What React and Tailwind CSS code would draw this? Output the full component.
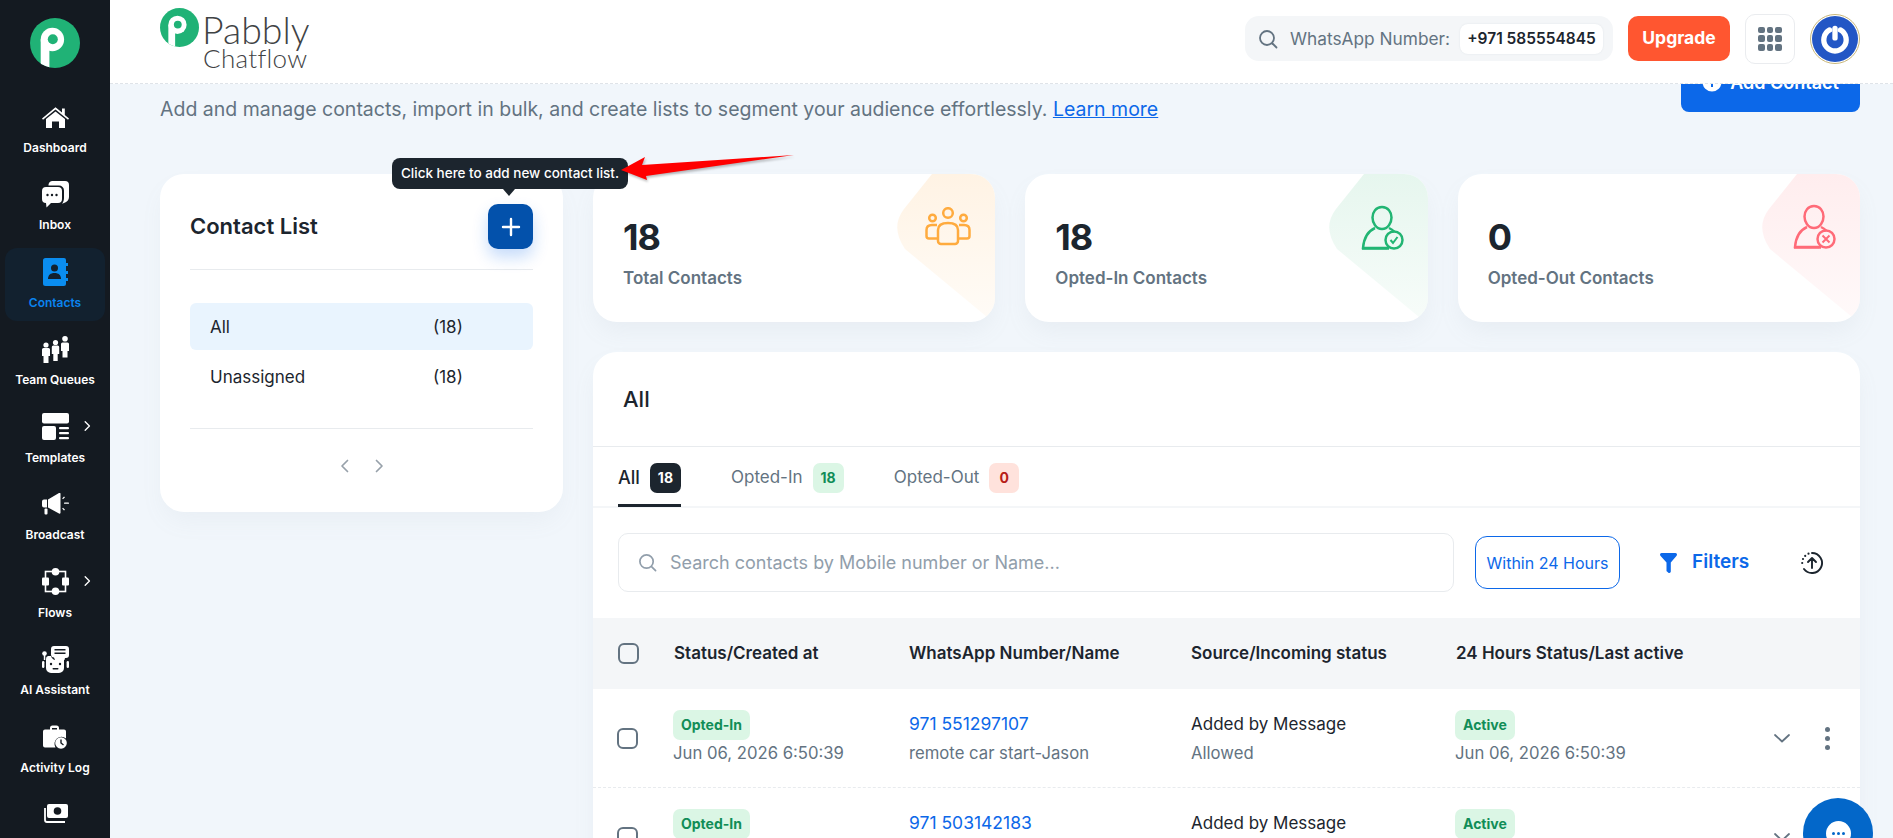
import React from "react";

const LogoMark = ({ className, id }) => (
  <svg viewBox="0 0 50 50" className={className}>
    <defs>
      <clipPath id={id}><circle cx="25" cy="25" r="25" /></clipPath>
    </defs>
    <circle cx="25" cy="25" r="25" fill="#20b276" />
    <g clipPath={`url(#${id})`}>
      <rect x="10.7" y="21.5" width="8.7" height="30" fill="#fff" />
      <circle cx="22.4" cy="21.5" r="11.7" fill="#fff" />
      <circle cx="22.8" cy="21.3" r="5" fill="#20b276" />
    </g>
  </svg>
);

const HomeIcon = () => (
  <svg width="27" height="22" viewBox="0 0 27 22" fill="#fff">
    <path d="M13.5 1.2 20 6.6V2.5h2.8v6.4L27 12.4l-1 1.3L13.5 3.6 1 13.7l-1-1.3z" />
    <path d="M13.5 5.4 23 13v9h-6v-6.5h-7V22H4v-9z" />
  </svg>
);
const InboxIcon = () => (
  <svg width="27" height="27" viewBox="0 0 27 27" fill="#fff">
    <path d="M10 0h13a4 4 0 0 1 4 4v12c0 3-2 5-5 6l-2 .8c1.4-1.8 2-3.500 2-5.800V9.500a5 5 0 0 0-5-5H6.500A4 4 0 0 1 10 0z" />
    <path d="M4 6h12a4 4 0 0 1 4 4v8a4 4 0 0 1-4 4H9l-4.500 4.500L4 22a4 4 0 0 1-4-4v-8a4 4 0 0 1 4-4z" />
    <circle cx="5.500" cy="14" r="1.200" fill="#141a21" />
    <circle cx="10" cy="14" r="1.200" fill="#141a21" />
    <circle cx="14.500" cy="14" r="1.200" fill="#141a21" />
  </svg>
);
const ContactsIcon = () => (
  <svg width="25" height="28" viewBox="0 0 25 28">
    <path fill="#0a8df0" d="M2.500 0H21a2 2 0 0 1 2 2v3h2v3h-2v5h2v3h-2v4h2v3h-2v3a2 2 0 0 1-2 2H2.500A2.500 2.500 0 0 1 0 25.500v-23A2.500 2.500 0 0 1 2.500 0z" />
    <circle cx="11.500" cy="10" r="3.500" fill="#12212f" />
    <path fill="#12212f" d="M5 21c0-4 2.500-6 6.500-6s6.500 2 6.500 6z" />
  </svg>
);
const TeamIcon = () => (
  <svg width="27" height="27" viewBox="0 0 27 27" fill="#fff">
    <circle cx="4" cy="9" r="2.600" /><path d="M0 13.500a1.500 1.500 0 0 1 1.500-1.500h5A1.500 1.500 0 0 1 8 13.500V20H6.500v7h-5v-7H0z" />
    <circle cx="13.500" cy="6.500" r="2.600" /><path d="M9.800 11a1.500 1.500 0 0 1 1.500-1.500h4.400a1.500 1.500 0 0 1 1.500 1.500v7h-1.500v7h-4.400v-7H9.800z" />
    <circle cx="23" cy="2.800" r="2.800" /><path d="M19 8a1.500 1.500 0 0 1 1.500-1.500h5A1.500 1.500 0 0 1 27 8v7h-1.500v6.500h-5V15H19z" />
  </svg>
);
const TemplatesIcon = () => (
  <svg width="27" height="27" viewBox="0 0 27 27" fill="#fff">
    <rect width="27" height="10.500" rx="2" />
    <rect y="13" width="14" height="14" rx="2" />
    <rect x="17" y="14" width="10" height="2.200" rx="1" />
    <rect x="17" y="19" width="10" height="2.200" rx="1" />
    <rect x="17" y="24" width="10" height="2.200" rx="1" />
  </svg>
);
const BroadcastIcon = () => (
  <svg width="27" height="22" viewBox="0 0 27 22" fill="#fff">
    <path d="M0 8.500A2 2 0 0 1 2 6.500h3v8H2a2 2 0 0 1-2-2zM6 6.500 17 0a1 1 0 0 1 1.500 1v18.500a1 1 0 0 1-1.500 1L6 14.500z" />
    <rect x="2.500" y="15.500" width="3" height="6" rx="1" />
    <rect x="22" y="9.500" width="5" height="1.300" rx=".6" />
    <path d="M22 3.500l1 .8-2 2-.8-.8zM22 17.500l1-.8-2-2-.8.8z" />
  </svg>
);
const FlowsIcon = () => (
  <svg width="27" height="27" viewBox="0 0 27 27" fill="none">
    <rect x="3.500" y="3.500" width="20" height="20" stroke="#fff" strokeWidth="1.600" />
    <circle cx="13.500" cy="3.800" r="3.800" fill="#fff" />
    <circle cx="13.500" cy="23.200" r="3.800" fill="#fff" />
    <rect y="9.500" width="7" height="8" rx="1" fill="#fff" />
    <rect x="20" y="9.500" width="7" height="8" rx="1" fill="#fff" />
  </svg>
);
const AiIcon = () => (
  <svg width="27" height="27" viewBox="0 0 27 27" fill="#fff">
    <circle cx="2.500" cy="7.500" r="2.300" />
    <rect x="1.800" y="9" width="1.500" height="5" />
    <path d="M12 0h12a3 3 0 0 1 3 3v6a3 3 0 0 1-3 3h-1l-.5 2H13l-1-2.500A3 3 0 0 1 9 9V3a3 3 0 0 1 3-3z" />
    <rect x="12.500" y="3" width="11" height="1.500" fill="#141a21" />
    <rect x="12.500" y="6.500" width="11" height="1.500" fill="#141a21" />
    <path d="M6 10h3c.5 2 2 3.500 4 4h9v8a5 5 0 0 1-5 5H9a5 5 0 0 1-5-5v-9a3 3 0 0 1 2-3z" />
    <rect x="0" y="15" width="2.400" height="7" rx="1.200" />
    <rect x="24.600" y="15" width="2.400" height="7" rx="1.200" />
    <circle cx="9" cy="18" r="1.200" fill="#141a21" />
    <circle cx="18" cy="18" r="1.200" fill="#141a21" />
    <rect x="10.500" y="22" width="6" height="1.400" rx=".7" fill="#141a21" />
  </svg>
);
const ActivityIcon = () => (
  <svg width="24" height="24" viewBox="0 0 24 24" fill="#fff">
    <path d="M7 5V3a2.500 2.500 0 0 1 2.500-2.500h4A2.500 2.500 0 0 1 16 3v2h-2V3h-5v2z" />
    <path d="M2 4.500h19a2 2 0 0 1 2 2v7a7 7 0 0 0-10.500 9H2a2 2 0 0 1-2-2v-14a2 2 0 0 1 2-2z" />
    <circle cx="18" cy="18" r="5.800" />
    <path d="M18 14.500V18l2.500 2" stroke="#141a21" strokeWidth="1.400" fill="none" />
  </svg>
);
const MoneyIcon = () => (
  <svg width="25" height="20" viewBox="0 0 25 20" fill="#fff">
    <rect x="4" y="0" width="21" height="14" rx="2" />
    <circle cx="14.500" cy="7" r="3.800" fill="#141a21" />
    <path d="M2 4v12a2 2 0 0 0 2 2h18" stroke="#fff" strokeWidth="1.800" fill="none" />
  </svg>
);

const navItems = [
  { label: "Dashboard", Icon: HomeIcon },
  { label: "Inbox", Icon: InboxIcon },
  { label: "Contacts", Icon: ContactsIcon, active: true },
  { label: "Team Queues", Icon: TeamIcon },
  { label: "Templates", Icon: TemplatesIcon, arrow: true },
  { label: "Broadcast", Icon: BroadcastIcon },
  { label: "Flows", Icon: FlowsIcon, arrow: true },
  { label: "AI Assistant", Icon: AiIcon },
  { label: "Activity Log", Icon: ActivityIcon },
  { label: "", Icon: MoneyIcon },
];

const Chevron = ({ dir = "right", className = "" }) => (
  <svg width="9" height="14" viewBox="0 0 9 14" fill="none" className={className}>
    <path d={dir === "right" ? "M1.500 1.500 7 7l-5.500 5.500" : "M7.500 1.500 2 7l5.500 5.500"} stroke="currentColor" strokeWidth="1.700" strokeLinecap="round" strokeLinejoin="round" />
  </svg>
);

const Sidebar = () => (
  <aside className="w-[110px] shrink-0 h-full bg-[#141a21] flex flex-col overflow-hidden">
    <div className="h-[93px] shrink-0 pt-[18px] flex justify-center">
      <LogoMark id="sideLogo" className="w-[50px] h-[50px]" />
    </div>
    <nav className="flex flex-col gap-[4.500px] px-[5px]">
      {navItems.map(({ label, Icon, active, arrow }, i) => (
        <div key={i} className={`relative h-[73px] shrink-0 flex flex-col items-center justify-center gap-[8px] rounded-[12px] ${active ? "bg-[#12212f]" : ""}`}>
          <div className="h-[28px] flex items-center justify-center"><Icon /></div>
          <span className={`h-[18px] text-[12px] leading-[18px] font-semibold whitespace-nowrap ${active ? "text-[#0a84f0]" : "text-white"}`}>{label}</span>
          {arrow && <Chevron className="absolute left-[79px] top-[17px] text-white w-[7px] h-[12px]" />}
        </div>
      ))}
    </nav>
  </aside>
);

const SearchIcon = ({ color, size = 20 }) => (
  <svg width={size} height={size} viewBox="0 0 20 20" fill="none" stroke={color} strokeWidth="1.800" strokeLinecap="round">
    <circle cx="9" cy="9" r="7" />
    <path d="m14.500 14.500 4 4" />
  </svg>
);

const Header = () => (
  <header className="relative z-20 h-[84px] shrink-0 bg-white border-b border-dashed border-[#dfe3e8] flex items-center justify-between pl-[50px] pr-[33px]">
    <div className="flex items-start h-[84px] pt-[8px]">
      <LogoMark id="headLogo" className="w-[39px] h-[39px]" />
      <div className="ml-[3px] flex flex-col font-['Lato'] font-light text-[#3f4345] mt-[3px]">
        <span className="text-[37.500px] leading-[38px]">Pabbly</span>
        <span className="text-[26px] leading-[18px] ml-[1px] tracking-[0.3px]">Chatflow</span>
      </div>
    </div>
    <div className="flex items-center pb-[6px]">
      <div className="w-[368px] h-[45px] rounded-[14px] bg-[#f4f6f8] flex items-center pl-[13px] pr-[10px]">
        <SearchIcon color="#637381" />
        <span className="ml-[12px] text-[17.300px] text-[#637381] whitespace-nowrap">WhatsApp Number:</span>
        <span className="ml-auto w-[143px] h-[30px] rounded-[8px] bg-white shadow-[0_0_2px_rgba(145,158,171,0.2)] flex items-center justify-center text-[15.500px] font-semibold text-[#1c252e] whitespace-nowrap">+971 585554845</span>
      </div>
      <button className="ml-[15px] w-[102px] h-[45px] rounded-[10px] bg-[#ff5630] text-white text-[17.500px] font-bold">Upgrade</button>
      <div className="ml-[15px] w-[50px] h-[50px] rounded-[10px] border border-[#eaecef] grid grid-cols-3 gap-[2px] p-[12px]">
        {Array.from({ length: 9 }).map((_, i) => (
          <span key={i} className="rounded-[2px] bg-[#637381]" />
        ))}
      </div>
      <div className="ml-[15px] w-[50px] h-[50px] rounded-full border border-[#c9b77a] p-[1px]">
        <div className="w-full h-full rounded-full bg-[#2356c5] flex items-center justify-center">
          <svg width="32" height="32" viewBox="0 0 30 30" fill="none" stroke="#fff" strokeWidth="5" strokeLinecap="round">
            <path d="M10 6.500a10.500 10.500 0 1 0 10 0" />
            <path d="M15 5v9" stroke="#fff" />
          </svg>
        </div>
      </div>
    </div>
  </header>
);

const Tooltip = () => (
  <div className="absolute left-[232px] -top-[16px] w-[236px] h-[31px] rounded-[8px] bg-[#1c252e] text-white text-[13.500px] font-medium flex items-center justify-center whitespace-nowrap z-30">
    Click here to add new contact list.
    <span className="absolute left-[111px] top-[31px] w-0 h-0 border-l-[6px] border-r-[6px] border-t-[7px] border-l-transparent border-r-transparent border-t-[#1c252e]" />
  </div>
);

const RedArrow = () => (
  <svg className="absolute left-[455px] -top-[24px] z-30" width="180" height="34" viewBox="0 0 180 34">
    <path d="M6 20 30 7l-3 8L179 5 31 26l1 4z" fill="#ff0000" style={{ filter: "drop-shadow(1px 2px 1px rgba(0,0,0,0.25))" }} />
  </svg>
);

const ContactListCard = () => (
  <section className="relative w-[403px] shrink-0 h-[338px] bg-white rounded-[24px] px-[30px] shadow-[0_12px_24px_-4px_rgba(145,158,171,0.08)]">
    <Tooltip />
    <RedArrow />
    <div className="h-[96px] pt-[10px] border-b border-[#e8ebee] flex items-center justify-between">
      <h2 className="text-[22px] font-semibold text-[#1c252e]">Contact List</h2>
      <button className="w-[45px] h-[45px] rounded-[10px] bg-[#0351ab] shadow-[0_8px_16px_rgba(12,104,233,0.24)] flex items-center justify-center">
        <svg width="20" height="20" viewBox="0 0 20 20" stroke="#fff" strokeWidth="2.400" strokeLinecap="round">
          <path d="M10 2v16M2 10h16" />
        </svg>
      </button>
    </div>
    <div className="pt-[33px] h-[159px] border-b border-[#e8ebee]">
      <div className="h-[47px] pt-[2px] rounded-[6px] bg-[#e9f4fe] flex items-center pl-[20px] text-[17px] text-[#1c252e]">
        <span className="w-[223px]">All</span><span>(18)</span>
      </div>
      <div className="h-[54px] pt-[2px] flex items-center pl-[20px] text-[17px] text-[#1c252e]">
        <span className="w-[223px]">Unassigned</span><span>(18)</span>
      </div>
    </div>
    <div className="flex items-center justify-center gap-[26px] h-[74px] text-[#97a1aa]">
      <Chevron dir="left" />
      <Chevron dir="right" />
    </div>
  </section>
);

const decor = "M339 0 L311 35 Q297 53 312 75 L394 143 L403 148 L403 0 Z";

const GroupIcon = () => (
  <svg width="46" height="40" viewBox="0 0 46 40" fill="none" stroke="#ffab3e" strokeWidth="2.500">
    <circle cx="23" cy="6" r="4.800" />
    <circle cx="7.500" cy="11" r="3.300" />
    <circle cx="38.500" cy="11" r="3.300" />
    <path d="M13 34V23c0-4.500 3-7 10-7s10 2.500 10 7v11a3 3 0 0 1-3 3H16a3 3 0 0 1-3-3z" />
    <path d="M12 18H7c-4 0-5.500 2-5.500 5v6c0 1.500 1 2.500 2.500 2.500h9" />
    <path d="M34 18h5c4 0 5.500 2 5.500 5v6c0 1.500-1 2.500-2.500 2.500h-9" />
  </svg>
);
const PersonIcon = ({ color, check }) => (
  <svg width="43" height="45" viewBox="0 0 43 45" fill="none" stroke={color} strokeWidth="2.500">
    <path d="M21 2c6 0 9.500 5 9.500 10.500S27 24 21 24s-9.500-6-9.500-11.500S15 2 21 2z" />
    <path d="M14 23c-7 3-11 9-12 20h24" />
    <path d="M28 23c2 1 4 2 5.500 4" />
    <path d="M1 43.300h27" strokeWidth="2.800" />
    <circle cx="33" cy="35" r="8.500" />
    {check ? (
      <path d="m29.500 35 2.500 3 4.500-6" strokeWidth="2" />
    ) : (
      <path d="m29.500 31.500 7 7m0-7-7 7" strokeWidth="2" />
    )}
  </svg>
);

const StatCard = ({ value, label, fill, id, children }) => (
  <div className="relative h-[148px] bg-white rounded-[24px] overflow-hidden shadow-[0_12px_24px_-4px_rgba(145,158,171,0.1)] pl-[30px] pt-[41px]">
    <svg className="absolute inset-0" width="403" height="148" viewBox="0 0 403 148">
      <defs>
        <linearGradient id={id} x1="0" y1="0" x2="0" y2="1">
          <stop offset="0" stopColor={fill} />
          <stop offset="1" stopColor={fill} stopOpacity="0.3" />
        </linearGradient>
      </defs>
      <path d={decor} fill={`url(#${id})`} />
    </svg>
    <div className="relative text-[36px] leading-[44px] font-bold tracking-[-1px] text-[#1c252e]">{value}</div>
    <div className="relative mt-[7px] text-[17px] leading-[24px] font-semibold text-[#637381]">{label}</div>
    {children}
  </div>
);

const Tab = ({ label, count, active, badge }) => (
  <div className={`h-[60px] pt-[4px] flex items-center gap-[10px] border-b-[3px] ${active ? "border-[#1c252e]" : "border-transparent"}`}>
    <span className={`${active ? "text-[18px] font-medium text-[#1c252e]" : "text-[17px] text-[#637381]"}`}>{label}</span>
    <span className={`h-[30px] min-w-[30px] px-[8px] rounded-[7px] flex items-center justify-center text-[14px] font-bold ${badge}`}>{count}</span>
  </div>
);

const Badge = ({ children }) => (
  <span className="inline-flex h-[30px] items-center px-[8px] rounded-[7px] bg-[#dbf6e5] text-[#118d57] text-[14px] font-bold whitespace-nowrap">{children}</span>
);

const Checkbox = () => <span className="block w-[21px] h-[21px] rounded-[6px] border-2 border-[#637381]" />;

const cols = "grid grid-cols-[81px_235px_282px_265px_1fr] items-center";

const rows = [
  { num: "971 551297107", name: "remote car start-Jason" },
  { num: "971 503142183", name: "remote car start-Jason" },
];

const TableRow = ({ num, name }) => (
  <div className={`${cols} h-[99px] shrink-0 border-b border-dashed border-[#e8ebee]`}>
    <div className="pl-[24px]"><Checkbox /></div>
    <div className="flex flex-col items-start -ml-[1px] -mt-[1px]">
      <Badge>Opted-In</Badge>
      <span className="text-[16.700px] leading-[26px] text-[#637381] whitespace-nowrap">Jun 06, 2026 6:50:39</span>
    </div>
    <div className="flex flex-col gap-[5px]">
      <span className="text-[17.500px] leading-[24px] text-[#0c68e9]">{num}</span>
      <span className="text-[16.700px] leading-[24px] text-[#637381]">{name}</span>
    </div>
    <div className="flex flex-col gap-[5px]">
      <span className="text-[17px] leading-[24px] text-[#1c252e]">Added by Message</span>
      <span className="text-[16.700px] leading-[24px] text-[#637381]">Allowed</span>
    </div>
    <div className="flex items-center">
      <div className="flex flex-col items-start -ml-[1px] -mt-[1px] w-[319px]">
        <Badge>Active</Badge>
        <span className="text-[16.700px] leading-[26px] text-[#637381] whitespace-nowrap">Jun 06, 2026 6:50:39</span>
      </div>
      <svg width="16" height="9" viewBox="0 0 16 9" fill="none" stroke="#637381" strokeWidth="1.800" strokeLinecap="round" strokeLinejoin="round"><path d="m1 1 7 6.500L15 1" /></svg>
      <div className="ml-[35px] flex flex-col gap-[4px]">
        <span className="w-[5px] h-[5px] rounded-full bg-[#637381]" />
        <span className="w-[5px] h-[5px] rounded-full bg-[#637381]" />
        <span className="w-[5px] h-[5px] rounded-full bg-[#637381]" />
      </div>
    </div>
  </div>
);

const TableCard = () => (
  <section className="bg-white rounded-t-[24px] shadow-[0_12px_24px_-4px_rgba(145,158,171,0.1)]">
    <div className="h-[95px] border-b border-[#e8ebee] flex items-center pl-[30px]">
      <h3 className="text-[22px] font-medium text-[#1c252e]">All</h3>
    </div>
    <div className="flex gap-[50px] px-[25px] h-[61px] border-b-[2px] border-[#f4f6f8]">
      <Tab label="All" count="18" active badge="bg-[#1c252e] text-white" />
      <Tab label="Opted-In" count="18" badge="bg-[#dbf6e5] text-[#118d57]" />
      <Tab label="Opted-Out" count="0" badge="bg-[#ffe2dc] text-[#b71d18]" />
    </div>
    <div className="flex items-center pl-[25px] pt-[25px] h-[110px] pb-[26px]">
      <div className="w-[836px] h-[59px] rounded-[10px] border border-[#e8ebee] flex items-center pl-[19px]">
        <SearchIcon color="#919eab" size={19} />
        <span className="ml-[13px] text-[18px] text-[#919eab] whitespace-nowrap">Search contacts by Mobile number or Name...</span>
      </div>
      <button className="ml-[21px] w-[145px] h-[53px] rounded-[12px] border border-[#0c68e9] text-[16px] text-[#0c68e9] whitespace-nowrap">Within 24 Hours</button>
      <svg className="ml-[40px]" width="17" height="20" viewBox="0 0 17 20" fill="#0c68e9"><path d="M0 1.500A1.500 1.500 0 0 1 1.500 0h14A1.500 1.500 0 0 1 17 1.500c0 .5-.2 1-.6 1.400L10.800 9.500v9a1.500 1.500 0 0 1-2.400 1.200L7 18.500a1 1 0 0 1-.5-1V9.500L.6 2.900A2 2 0 0 1 0 1.500z" /></svg>
      <span className="ml-[15px] w-[57px] text-[19px] font-semibold text-[#0c68e9]">Filters</span>
      <svg className="ml-[52px]" width="22" height="22" viewBox="0 0 22 22" fill="none" stroke="#1c252e" strokeWidth="1.900" strokeLinecap="round" strokeLinejoin="round">
        <path d="M11 1a10 10 0 1 1-8 16" />
        <path d="M1.200 11v.01M2 7v.01M4.200 3.900v.01M7.500 1.700v.01" strokeWidth="2.200" />
        <path d="M11 16V6.500M7 10l4-4 4 4" />
      </svg>
    </div>
    <div className={`${cols} h-[71px] bg-[#f4f6f8] text-[17px] font-semibold text-[#1c252e]`}>
      <div className="pl-[25px]"><Checkbox /></div>
      <div>Status/Created at</div>
      <div>WhatsApp Number/Name</div>
      <div>Source/Incoming status</div>
      <div>24 Hours Status/Last active</div>
    </div>
    {rows.map((r) => <TableRow key={r.num} {...r} />)}
  </section>
);

export default function App() {
  return (
    <div className="relative h-screen w-full overflow-hidden flex bg-[#f1f6fb] font-['Inter','Noto_Sans',sans-serif]">
      <Sidebar />
      <main className="flex-1 min-w-0 h-full flex flex-col">
        <Header />
        <div className="flex-1 min-h-0 overflow-hidden pl-[50px] pr-[33px]">
          <div className="-mt-[32px] relative flex justify-between h-[71px]">
            <p className="self-end text-[19.500px] leading-[28px] text-[#637381] whitespace-nowrap">
              Add and manage contacts, import in bulk, and create lists to segment your audience effortlessly.{" "}
              <span className="text-[#0c68e9] underline">Learn more</span>
            </p>
            <button className="h-[60px] w-[179px] rounded-[8px] bg-[#0c68e9] text-white text-[18px] font-semibold flex items-center justify-center gap-[8px] whitespace-nowrap">
              <svg width="20" height="20" viewBox="0 0 20 20"><circle cx="10" cy="10" r="9.500" fill="#fff" /><path d="M10 5v10M5 10h10" stroke="#0c68e9" strokeWidth="2" /></svg>
              Add Contact
            </button>
          </div>
          <div className="mt-[51px] flex gap-[30px] items-start">
            <ContactListCard />
            <div className="flex-1 min-w-0 flex flex-col gap-[30px]">
              <div className="grid grid-cols-3 gap-[30px]">
                <StatCard value="18" label="Total Contacts" fill="#fff3e4" id="g1">
                  <div className="absolute left-[332px] top-[33px]"><GroupIcon /></div>
                </StatCard>
                <StatCard value="18" label="Opted-In Contacts" fill="#e6f6ee" id="g2">
                  <div className="absolute left-[336px] top-[31px]"><PersonIcon color="#22b573" check /></div>
                </StatCard>
                <StatCard value="0" label="Opted-Out Contacts" fill="#ffedee" id="g3">
                  <div className="absolute left-[335px] top-[30px]"><PersonIcon color="#ff6b78" /></div>
                </StatCard>
              </div>
              <TableCard />
            </div>
          </div>
        </div>
      </main>
      <div className="absolute left-[1803px] top-[798px] w-[70px] h-[70px] rounded-full bg-[#0367c9] flex items-center justify-center z-40">
        <div className="w-[25px] h-[25px] rounded-full bg-white flex items-center justify-center gap-[2px]">
          <span className="w-[3px] h-[3px] rounded-full bg-[#0367c9]" />
          <span className="w-[3px] h-[3px] rounded-full bg-[#0367c9]" />
          <span className="w-[3px] h-[3px] rounded-full bg-[#0367c9]" />
        </div>
      </div>
    </div>
  );
}
